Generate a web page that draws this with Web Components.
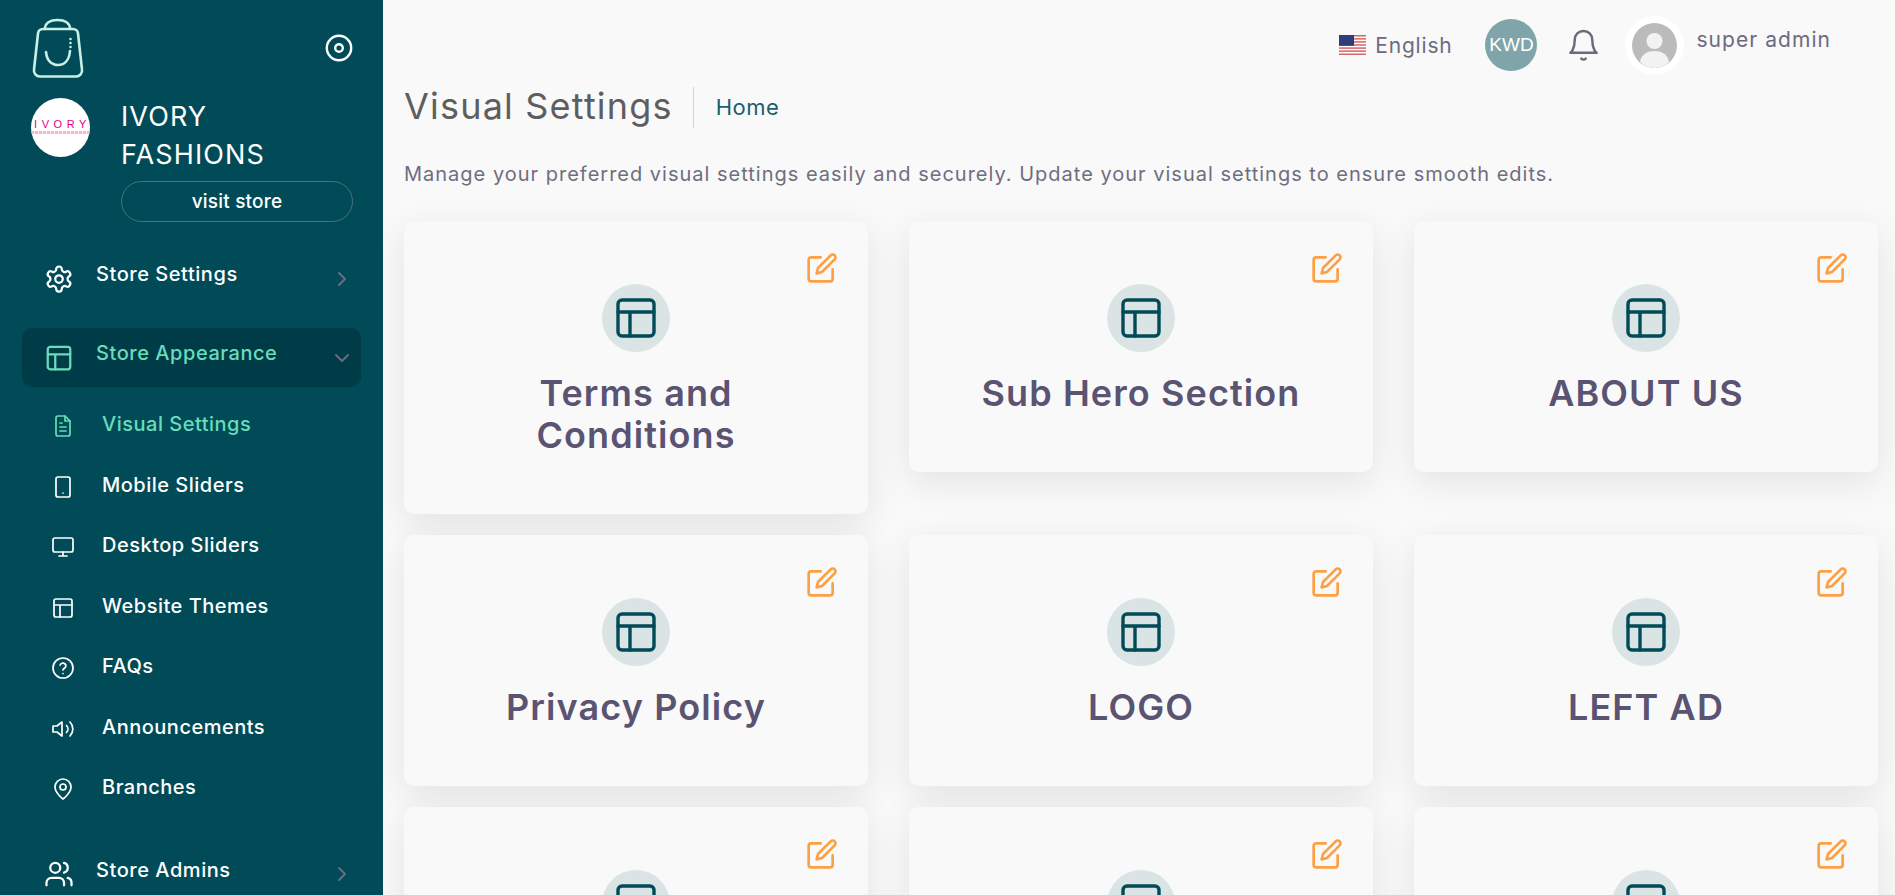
<!DOCTYPE html>
<html lang="en">
<head>
<meta charset="utf-8">
<title>Visual Settings</title>
<style>
  html, body { margin: 0; height: 100%; overflow: hidden; background: #f9f9f9; }
  body { font-family: Inter, "Noto Sans", sans-serif; }
</style>
</head>
<body>
<app-shell>
  <side-bar slot="side">
    <nav-item icon="settings" chevron="right" label="Store Settings"></nav-item>
    <nav-item icon="layout" chevron="down" label="Store Appearance" active></nav-item>
    <sub-item icon="file" label="Visual Settings" active></sub-item>
    <sub-item icon="tablet" label="Mobile Sliders"></sub-item>
    <sub-item icon="monitor" label="Desktop Sliders"></sub-item>
    <sub-item icon="layout" label="Website Themes"></sub-item>
    <sub-item icon="help" label="FAQs"></sub-item>
    <sub-item icon="speaker" label="Announcements"></sub-item>
    <sub-item icon="pin" label="Branches"></sub-item>
    <nav-item class="last" icon="users" chevron="right" label="Store Admins"></nav-item>
  </side-bar>
  <top-bar></top-bar>
  <page-head title-text="Visual Settings" crumb="Home">Manage your preferred visual settings easily and securely. Update your visual settings to ensure smooth edits.</page-head>
  <card-grid>
    <visual-card>Terms and Conditions</visual-card>
    <visual-card>Sub Hero Section</visual-card>
    <visual-card>ABOUT US</visual-card>
    <visual-card>Privacy Policy</visual-card>
    <visual-card>LOGO</visual-card>
    <visual-card>LEFT AD</visual-card>
    <visual-card></visual-card>
    <visual-card></visual-card>
    <visual-card></visual-card>
  </card-grid>
</app-shell>

<script>
// stroke icons, all on a 24 box
const ICONS = {
  settings: '<path d="M12.22 2h-.44a2 2 0 0 0-2 2v.18a2 2 0 0 1-1 1.73l-.43.25a2 2 0 0 1-2 0l-.15-.08a2 2 0 0 0-2.73.73l-.22.38a2 2 0 0 0 .73 2.73l.15.1a2 2 0 0 1 1 1.72v.51a2 2 0 0 1-1 1.74l-.15.09a2 2 0 0 0-.73 2.73l.22.38a2 2 0 0 0 2.73.73l.15-.08a2 2 0 0 1 2 0l.43.25a2 2 0 0 1 1 1.73V20a2 2 0 0 0 2 2h.44a2 2 0 0 0 2-2v-.18a2 2 0 0 1 1-1.73l.43-.25a2 2 0 0 1 2 0l.15.08a2 2 0 0 0 2.73-.73l.22-.39a2 2 0 0 0-.73-2.73l-.15-.08a2 2 0 0 1-1-1.74v-.5a2 2 0 0 1 1-1.74l.15-.09a2 2 0 0 0 .73-2.73l-.22-.38a2 2 0 0 0-2.73-.73l-.15.08a2 2 0 0 1-2 0l-.43-.25a2 2 0 0 1-1-1.73V4a2 2 0 0 0-2-2z"/><circle cx="12" cy="12" r="3"/>',
  layout: '<rect x="3" y="3" width="18" height="18" rx="2"/><path d="M3 9h18M9 9v12"/>',
  file: '<path d="M14 2H7a2 2 0 0 0-2 2v16a2 2 0 0 0 2 2h10a2 2 0 0 0 2-2V7z"/><path d="M14 2v5h5M9 9h2M9 13h6M9 17h6"/>',
  tablet: '<rect x="5" y="2" width="14" height="20" rx="2"/><path d="M12 18h.01"/>',
  monitor: '<rect x="2" y="3" width="20" height="14" rx="2"/><path d="M8 21h8M12 17v4"/>',
  help: '<circle cx="12" cy="12" r="10"/><path d="M9.1 9a3 3 0 0 1 5.8 1c0 2-2.9 2.4-2.9 4M12 17.5h.01"/>',
  speaker: '<path d="M11 5 6 9H2v6h4l5 4z"/><path d="M15.5 8.5a5 5 0 0 1 0 7M19 5a10 10 0 0 1 0 14"/>',
  pin: '<path d="M20 10c0 6-8 12-8 12s-8-6-8-12a8 8 0 0 1 16 0z"/><circle cx="12" cy="10" r="3"/>',
  users: '<path d="M16 21v-2a4 4 0 0 0-4-4H6a4 4 0 0 0-4 4v2"/><circle cx="9" cy="7" r="4"/><path d="M22 21v-2a4 4 0 0 0-3-3.87M16 3.13a4 4 0 0 1 0 7.75"/>',
  edit: '<path d="M11 4H4a2 2 0 0 0-2 2v14a2 2 0 0 0 2 2h14a2 2 0 0 0 2-2v-7"/><path d="M18.5 2.5a2.121 2.121 0 0 1 3 3L12 15l-4 1 1-4z"/>',
  bell: '<path d="M6 8a6 6 0 0 1 12 0c0 7 3 9 3 9H3s3-2 3-9"/><path d="M10.500 21a2 2 0 0 0 3 0"/>',
  right: '<path d="m9 6 6 6-6 6"/>',
  down: '<path d="m6 9 6 6 6-6"/>'
};

class UiIcon extends HTMLElement {
  constructor() {
    super();
    const size = this.getAttribute('size') || 24;
    const stroke = this.getAttribute('stroke') || 2;
    this.attachShadow({ mode: 'open' });
    this.shadowRoot.innerHTML = `
      <style>
        :host { display: block; width: ${size}px; height: ${size}px; flex: none; }
        svg { display: block; width: 100%; height: 100%; fill: none; stroke: currentColor; stroke-linecap: round; stroke-linejoin: round; }
      </style>
      <svg viewBox="0 0 24 24" stroke-width="${stroke}">${ICONS[this.getAttribute('name')] || ''}</svg>
    `;
  }
}
customElements.define('ui-icon', UiIcon);

class AppShell extends HTMLElement {
  constructor() {
    super();
    this.attachShadow({ mode: 'open' });
    this.shadowRoot.innerHTML = `
      <style>
        :host { display: grid; grid-template-columns: 383px 1fr; height: 895px; overflow: hidden; }
        main { min-width: 0; overflow: hidden; padding: 0 17px 0 21px; }
      </style>
      <slot name="side"></slot>
      <main><slot></slot></main>
    `;
  }
}
customElements.define('app-shell', AppShell);

class SideBar extends HTMLElement {
  constructor() {
    super();
    this.attachShadow({ mode: 'open' });
    this.shadowRoot.innerHTML = `
      <style>
        :host { display: block; height: 895px; overflow: hidden; background: #004b57; color: #fff; font-family: Inter, sans-serif; }
        .brand { display: flex; justify-content: space-between; align-items: flex-start; padding: 18px 29px 0 32px; height: 98px; box-sizing: border-box; }
        .bag { width: 52px; height: 60px; display: block; }
        .target { width: 30px; height: 30px; margin-top: 15px; display: block; }
        .store { display: grid; grid-template-columns: 59px 1fr; column-gap: 31px; padding: 0 30px 0 31px; height: 151px; align-items: start; }
        .logo { width: 59px; height: 59px; border-radius: 50%; background: #fff; overflow: hidden; display: flex; flex-direction: column; align-items: center; padding-top: 20px; box-sizing: border-box; }
        .logo b { color: #e5007d; font: 400 11px/12px "Liberation Sans", sans-serif; letter-spacing: 4.600px; white-space: nowrap; margin-right: -4px; }
        .logo i { display: block; width: 59px; height: 3px; margin-top: 1px; flex: none; background: repeating-linear-gradient(90deg, #f5b5d8 0 3px, #fde8f3 3px 4px); }
        .name { font-size: 27px; line-height: 38px; font-weight: 400; letter-spacing: 1.100px; }
        .visit { display: block; box-sizing: border-box; height: 41px; margin-top: 7px; line-height: 39px; border: 1px solid #45747d; border-radius: 21px; text-align: center; font-size: 19px; font-weight: 500; letter-spacing: .2px; }
      </style>
      <div class="brand">
        <svg class="bag" viewBox="0 0 52 60" fill="none" stroke="#c8f0e4" stroke-width="2.600" stroke-linecap="round" stroke-linejoin="round">
          <path d="M11 11h30a5 5 0 0 1 5 4.500l4 36a6 6 0 0 1-6 7H8a6 6 0 0 1-6-7l4-36a5 5 0 0 1 5-4.500z"/>
          <path d="M13 11c0-6 5-9 12.500-9s12.500 3 12.500 9"/>
          <path d="M14 34c1 10 7 13 12 13s11-3 12-14"/>
          <path d="M38.500 21v0M38.500 25v0M38.500 29v0"/>
        </svg>
        <svg class="target" viewBox="0 0 30 30" fill="none" stroke="#fff" stroke-width="2.400">
          <circle cx="15" cy="15" r="12.200"/><circle cx="15" cy="15" r="3.800"/>
        </svg>
      </div>
      <div class="store">
        <div class="logo"><b>IVORY</b><i></i></div>
        <div>
          <div class="name">IVORY<br>FASHIONS</div>
          <div class="visit">visit store</div>
        </div>
      </div>
      <slot></slot>
    `;
  }
}
customElements.define('side-bar', SideBar);

class NavItem extends HTMLElement {
  constructor() {
    super();
    const active = this.hasAttribute('active');
    this.attachShadow({ mode: 'open' });
    this.shadowRoot.innerHTML = `
      <style>
        :host { display: flex; align-items: center; height: 59px; margin: 0 22px ${active ? 9 : 20}px; padding: 0 7px 0 22px; border-radius: 10px; color: ${active ? '#69dcbb' : '#fff'}; background: ${active ? '#003c47' : 'none'}; font-size: 20px; font-weight: 500; }
        :host(.last) { margin-top: 25px; margin-bottom: 0; }
        span { flex: 1; margin-left: 22px; padding-bottom: 9px; letter-spacing: .55px; white-space: nowrap; }
        .chev { color: #6b6c80; }
      </style>
      <ui-icon name="${this.getAttribute('icon')}" size="30" stroke="1.800"></ui-icon>
      <span>${this.getAttribute('label')}</span>
      <ui-icon class="chev" name="${this.getAttribute('chevron')}" size="24" stroke="2"></ui-icon>
    `;
  }
}
customElements.define('nav-item', NavItem);

class SubItem extends HTMLElement {
  constructor() {
    super();
    const active = this.hasAttribute('active');
    this.attachShadow({ mode: 'open' });
    this.shadowRoot.innerHTML = `
      <style>
        :host { display: flex; align-items: center; height: 60.500px; padding-left: 51px; color: ${active ? '#69dcbb' : '#fff'}; font-size: 20px; font-weight: 500; }
        span { margin-left: 27px; padding-bottom: 4px; letter-spacing: .5px; white-space: nowrap; }
      </style>
      <ui-icon name="${this.getAttribute('icon')}" size="24" stroke="1.700"></ui-icon>
      <span>${this.getAttribute('label')}</span>
    `;
  }
}
customElements.define('sub-item', SubItem);

class TopBar extends HTMLElement {
  constructor() {
    super();
    // flag stripes
    let stripes = '';
    for (let i = 0; i < 7; i++) stripes += `<rect y="${i * 2 * 20 / 13}" width="27" height="${20 / 13}" fill="#d9686a"/>`;
    this.attachShadow({ mode: 'open' });
    this.shadowRoot.innerHTML = `
      <style>
        :host { display: flex; align-items: center; justify-content: flex-end; height: 80px; box-sizing: border-box; padding: 10px 47px 0 0; color: #6b6b80; font-size: 21px; }
        svg.flag { width: 27px; height: 20px; display: block; }
        .lang { margin-left: 9px; letter-spacing: .8px; }
        .cur { width: 52px; height: 52px; margin-left: 33px; border-radius: 50%; background: #7fa5aa; color: #fff; font: 400 19px/52px "Liberation Sans", sans-serif; text-align: center; }
        ui-icon { margin-left: 29px; }
        .ava { width: 59px; height: 59px; margin-left: 24px; box-sizing: border-box; padding: 7px; border-radius: 50%; background: #fff; flex: none; }
        .ava svg { width: 100%; height: 100%; display: block; }
        .user { margin-left: 12px; padding-bottom: 11px; letter-spacing: 1.050px; }
      </style>
      <svg class="flag" viewBox="0 0 27 20">
        <rect width="27" height="20" fill="#fff"/>${stripes}
        <rect width="15" height="10.800" fill="#2f3d7a"/>
      </svg>
      <span class="lang">English</span>
      <div class="cur">KWD</div>
      <ui-icon name="bell" size="35" stroke="1.700"></ui-icon>
      <div class="ava">
        <svg viewBox="0 0 45 45">
          <circle cx="22.500" cy="22.500" r="22.500" fill="#bbb"/>
          <circle cx="22.500" cy="18" r="8" fill="#f2f2f2"/>
          <path d="M8 39c1-8 8-11 14.500-11S36 31 37 39c-3 3-9 6-14.500 6S11 42 8 39z" fill="#f2f2f2"/>
        </svg>
      </div>
      <span class="user">super admin</span>
    `;
  }
}
customElements.define('top-bar', TopBar);

class PageHead extends HTMLElement {
  constructor() {
    super();
    this.attachShadow({ mode: 'open' });
    this.shadowRoot.innerHTML = `
      <style>
        :host { display: block; height: 141px; box-sizing: border-box; padding-top: 7px; }
        .row { display: flex; align-items: center; height: 41px; }
        h1 { margin: 0; padding-bottom: 4px; font-size: 36px; font-weight: 400; color: #5e5e5e; letter-spacing: 1.200px; white-space: nowrap; }
        .crumb { margin-left: 20px; padding-left: 22px; border-left: 1px solid #d4d4d4; height: 41px; line-height: 41px; font-size: 22px; color: #1b5f6c; letter-spacing: .5px; }
        p { margin: 32px 0 0; font-size: 20px; line-height: 28px; color: #6e6e80; letter-spacing: 1px; white-space: nowrap; }
      </style>
      <div class="row"><h1>${this.getAttribute('title-text')}</h1><div class="crumb">${this.getAttribute('crumb')}</div></div>
      <p><slot></slot></p>
    `;
  }
}
customElements.define('page-head', PageHead);

class CardGrid extends HTMLElement {
  constructor() {
    super();
    this.attachShadow({ mode: 'open' });
    this.shadowRoot.innerHTML = `
      <style>
        :host { display: grid; grid-template-columns: repeat(3, 464px); column-gap: 41px; row-gap: 21px; align-items: start; }
      </style>
      <slot></slot>
    `;
  }
}
customElements.define('card-grid', CardGrid);

class VisualCard extends HTMLElement {
  constructor() {
    super();
    this.attachShadow({ mode: 'open' });
    this.shadowRoot.innerHTML = `
      <style>
        :host { display: block; position: relative; box-sizing: border-box; padding: 63px 60px 58px; min-height: 251px; background: #f9f9f9; border-radius: 10px; box-shadow: 0 10px 36px rgba(0, 0, 0, .09); text-align: center; }
        .edit { position: absolute; top: 31px; right: 30px; color: #ff9f43; }
        .disc { width: 68px; height: 68px; margin: 0 auto 20px; border-radius: 50%; background: #dae4e5; color: #004b57; display: flex; align-items: center; justify-content: center; }
        h2 { margin: 0; font-size: 36px; line-height: 42px; font-weight: 600; color: #5a5372; letter-spacing: 1.100px; }
      </style>
      <ui-icon class="edit" name="edit" size="32" stroke="2"></ui-icon>
      <div class="disc"><ui-icon name="layout" size="48" stroke="1.700"></ui-icon></div>
      <h2><slot></slot></h2>
    `;
  }
}
customElements.define('visual-card', VisualCard);
</script>
</body>
</html>
